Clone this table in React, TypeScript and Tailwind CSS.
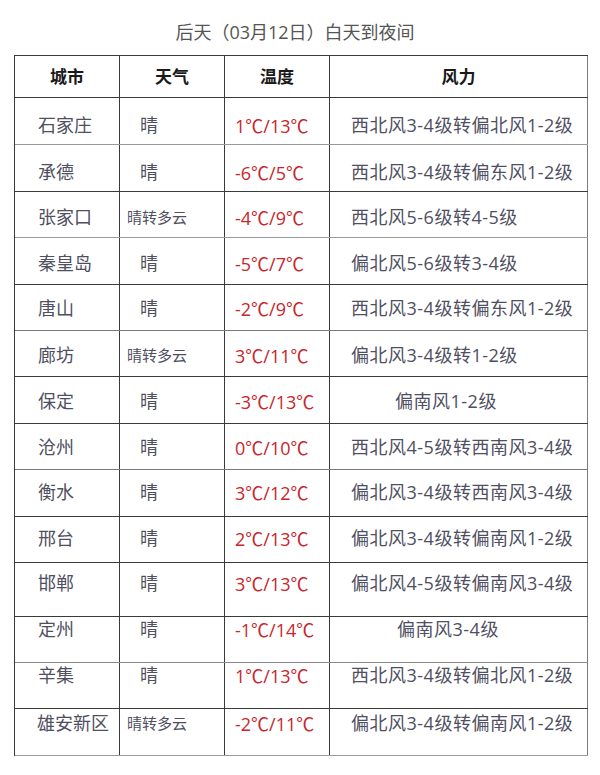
import React from "react";

type Row = {
  city: string;
  weather: string;
  temp: string;
  wind: string;
  h: string;
  pt: string;
  windPl: string;
  line: string;
};

const rows: Row[] = [
  { city: "石家庄", weather: "晴", temp: "1℃/13℃", wind: "西北风3-4级转偏北风1-2级", h: "h-[47px]", pt: "pt-[15px]", windPl: "pl-[21px]", line: "border-b-[#9a9a9a]" },
  { city: "承德", weather: "晴", temp: "-6℃/5℃", wind: "西北风3-4级转偏东风1-2级", h: "h-[47px]", pt: "pt-[15px]", windPl: "pl-[21px]", line: "border-b-[#3a3a3a]" },
  { city: "张家口", weather: "晴转多云", temp: "-4℃/9℃", wind: "西北风5-6级转4-5级", h: "h-[46px]", pt: "pt-[13px]", windPl: "pl-[21px]", line: "border-b-[#9a9a9a]" },
  { city: "秦皇岛", weather: "晴", temp: "-5℃/7℃", wind: "偏北风5-6级转3-4级", h: "h-[47px]", pt: "pt-[13px]", windPl: "pl-[21px]", line: "border-b-[#3a3a3a]" },
  { city: "唐山", weather: "晴", temp: "-2℃/9℃", wind: "西北风3-4级转偏东风1-2级", h: "h-[46px]", pt: "pt-[11px]", windPl: "pl-[21px]", line: "border-b-[#7a7a7a]" },
  { city: "廊坊", weather: "晴转多云", temp: "3℃/11℃", wind: "偏北风3-4级转1-2级", h: "h-[46px]", pt: "pt-[12px]", windPl: "pl-[21px]", line: "border-b-[#3a3a3a]" },
  { city: "保定", weather: "晴", temp: "-3℃/13℃", wind: "偏南风1-2级", h: "h-[47px]", pt: "pt-[12px]", windPl: "pl-[65px]", line: "border-b-[#3a3a3a]" },
  { city: "沧州", weather: "晴", temp: "0℃/10℃", wind: "西北风4-5级转西南风3-4级", h: "h-[46px]", pt: "pt-[11px]", windPl: "pl-[21px]", line: "border-b-[#7a7a7a]" },
  { city: "衡水", weather: "晴", temp: "3℃/12℃", wind: "偏北风3-4级转西南风3-4级", h: "h-[47px]", pt: "pt-[10px]", windPl: "pl-[21px]", line: "border-b-[#3a3a3a]" },
  { city: "邢台", weather: "晴", temp: "2℃/13℃", wind: "偏北风3-4级转偏南风1-2级", h: "h-[46px]", pt: "pt-[9px]", windPl: "pl-[21px]", line: "border-b-[#3a3a3a]" },
  { city: "邯郸", weather: "晴", temp: "3℃/13℃", wind: "偏北风4-5级转偏南风3-4级", h: "h-[54px]", pt: "pt-[8px]", windPl: "pl-[21px]", line: "border-b-[#3a3a3a]" },
  { city: "定州", weather: "晴", temp: "-1℃/14℃", wind: "偏南风3-4级", h: "h-[46px]", pt: "pt-[0px]", windPl: "pl-[67px]", line: "border-b-[#8a8a8a]" },
  { city: "辛集", weather: "晴", temp: "1℃/13℃", wind: "西北风3-4级转偏北风1-2级", h: "h-[46px]", pt: "pt-[0px]", windPl: "pl-[21px]", line: "border-b-[#3a3a3a]" },
  { city: "雄安新区", weather: "晴转多云", temp: "-2℃/11℃", wind: "偏北风3-4级转偏南风1-2级", h: "h-[47px]", pt: "pt-[2px]", windPl: "pl-[21px]", line: "border-b-[#9a9a9a]" },
];

const font = "font-['Open_Sans','Noto_Sans_CJK_SC',sans-serif]";

function Temp({ value }: { value: string }) {
  const parts = value.split("℃");
  return (
    <>
      {parts.map((p, i) => (
        <React.Fragment key={i}>
          {p}
          {i < parts.length - 1 ? (
            <span className="font-['Noto_Sans_CJK_SC',sans-serif]">℃</span>
          ) : null}
        </React.Fragment>
      ))}
    </>
  );
}

export default function App() {
  return (
    <div className={`w-[600px] h-[775px] bg-white ${font}`}>
      <div className="pt-[20px] h-[44px] text-center text-[18px] leading-[24px] text-[#555555] pr-[10px]">
        后天（03月12日）白天到夜间
      </div>
      <div className="mt-[11px] ml-[14px] w-[574px] border-l border-t border-l-[#3a3a3a] border-t-[#3a3a3a] flex flex-col">
        <div className="flex h-[42px] border-b border-b-[#3a3a3a] text-[17px] font-bold text-[#1a1a1a] leading-[24px]">
          <div className="w-[105px] border-r border-r-[#3a3a3a] flex items-center justify-center">城市</div>
          <div className="w-[105px] border-r border-r-[#3a3a3a] flex items-center justify-center">天气</div>
          <div className="w-[105px] border-r border-r-[#3a3a3a] flex items-center justify-center">温度</div>
          <div className="w-[258px] border-r border-r-[#7a7a7a] flex items-center justify-center">风力</div>
        </div>
        {rows.map((r) => (
          <div key={r.city} className={`flex ${r.h} border-b ${r.line} text-[18px] leading-[24px] text-[#4f4f5f]`}>
            <div className={`w-[105px] border-r border-r-[#3a3a3a] ${r.pt} whitespace-nowrap ${r.city.length === 4 ? "pl-[22px]" : "pl-[23px]"}`}>
              {r.city}
            </div>
            <div
              className={`w-[105px] border-r border-r-[#3a3a3a] ${r.pt} whitespace-nowrap ${
                r.weather.length > 1 ? "pl-[7px] text-[15px]" : "pl-[20px]"
              }`}
            >
              {r.weather}
            </div>
            <div className={`w-[105px] border-r border-r-[#3a3a3a] ${r.pt} pl-[10px] text-[#c8262c] whitespace-nowrap`}>
              <Temp value={r.temp} />
            </div>
            <div className={`w-[258px] border-r border-r-[#7a7a7a] ${r.pt} ${r.windPl} whitespace-nowrap tracking-[0.5px]`}>
              {r.wind}
            </div>
          </div>
        ))}
      </div>
    </div>
  );
}
